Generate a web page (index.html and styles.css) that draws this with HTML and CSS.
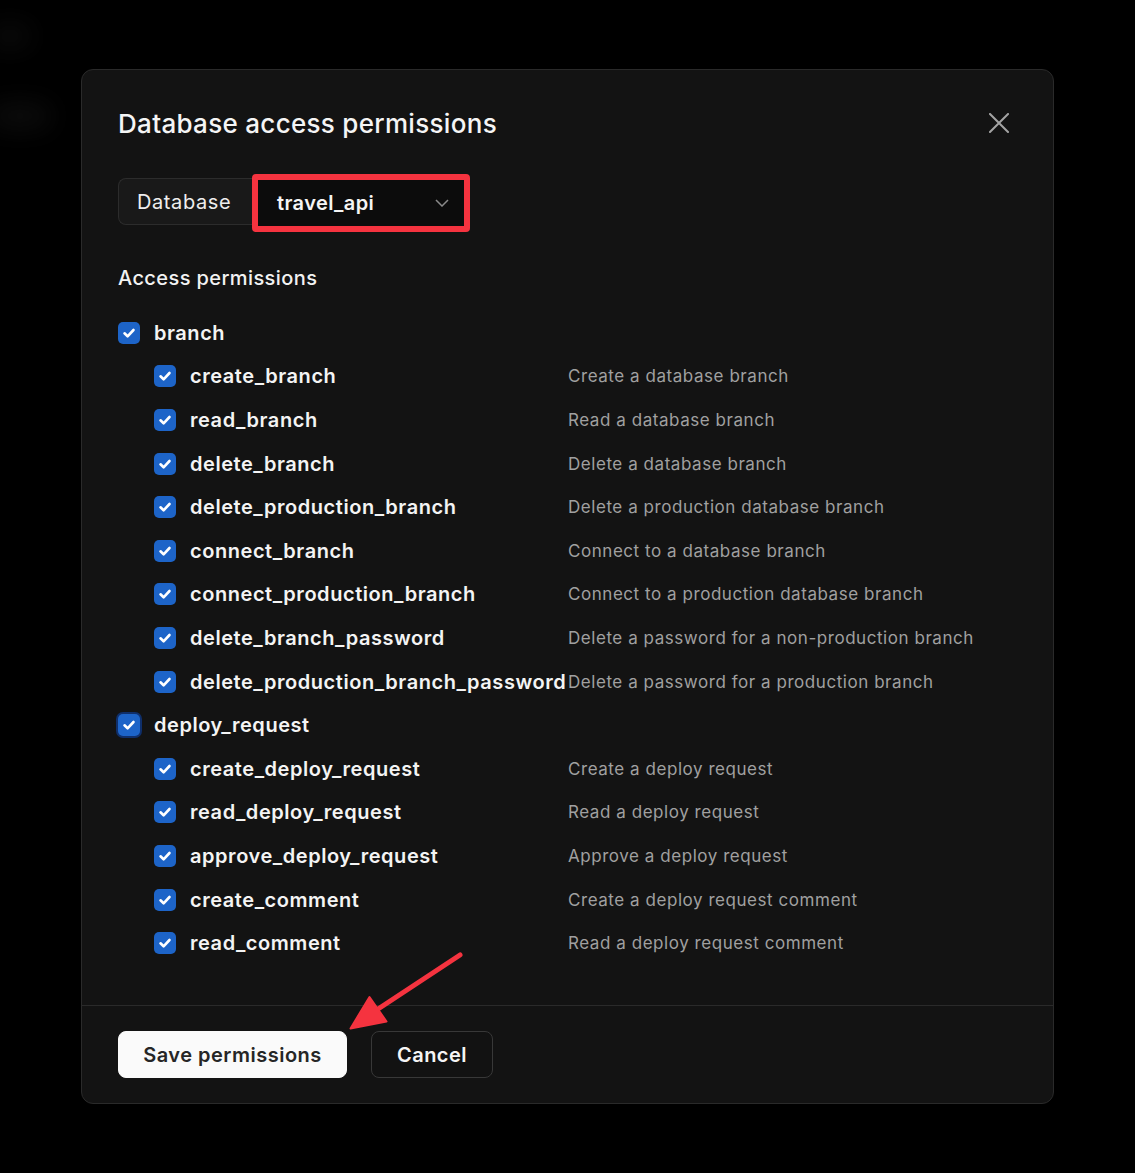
FILE: index.html
```html
<!DOCTYPE html>
<html lang="en">
<head>
<meta charset="utf-8">
<title>Database access permissions</title>
<link rel="stylesheet" href="styles.css">
</head>
<body>
<div class="backdrop">
  <div class="ghost ghost-a"></div>
  <div class="ghost ghost-b"></div>
  <div class="modal">
    <div class="modal-body">
      <div class="header">
        <h1 class="title">Database access permissions</h1>
        <button class="close" aria-label="Close">
          <svg width="20" height="20" viewBox="0 0 20 20"><path d="M1 1L19 19M19 1L1 19" stroke="#a3a3a3" stroke-width="2" stroke-linecap="square" fill="none"/></svg>
        </button>
      </div>
      <div class="db-picker">
        <div class="db-label">Database</div>
        <div class="db-select">
          <span>travel_api</span>
          <svg width="14" height="8" viewBox="0 0 14 8"><path d="M1 1L7 7L13 1" stroke="#8a8a8a" stroke-width="1.5" fill="none"/></svg>
        </div>
      </div>
      <h2 class="section">Access permissions</h2>
      <div class="perms">
        <div class="row parent"><span class="cb"><svg viewBox="0 0 22 22"><path d="M6.5 11.3L9.6 14.3L15.5 8" stroke="#fff" stroke-width="2.6" fill="none" stroke-linecap="round" stroke-linejoin="round"/></svg></span><span class="name">branch</span></div>
        <div class="row child"><span class="cb"><svg viewBox="0 0 22 22"><path d="M6.5 11.3L9.6 14.3L15.5 8" stroke="#fff" stroke-width="2.6" fill="none" stroke-linecap="round" stroke-linejoin="round"/></svg></span><span class="name">create_branch</span><span class="desc">Create a database branch</span></div>
        <div class="row child"><span class="cb"><svg viewBox="0 0 22 22"><path d="M6.5 11.3L9.6 14.3L15.5 8" stroke="#fff" stroke-width="2.6" fill="none" stroke-linecap="round" stroke-linejoin="round"/></svg></span><span class="name">read_branch</span><span class="desc">Read a database branch</span></div>
        <div class="row child"><span class="cb"><svg viewBox="0 0 22 22"><path d="M6.5 11.3L9.6 14.3L15.5 8" stroke="#fff" stroke-width="2.6" fill="none" stroke-linecap="round" stroke-linejoin="round"/></svg></span><span class="name">delete_branch</span><span class="desc">Delete a database branch</span></div>
        <div class="row child"><span class="cb"><svg viewBox="0 0 22 22"><path d="M6.5 11.3L9.6 14.3L15.5 8" stroke="#fff" stroke-width="2.6" fill="none" stroke-linecap="round" stroke-linejoin="round"/></svg></span><span class="name">delete_production_branch</span><span class="desc">Delete a production database branch</span></div>
        <div class="row child"><span class="cb"><svg viewBox="0 0 22 22"><path d="M6.5 11.3L9.6 14.3L15.5 8" stroke="#fff" stroke-width="2.6" fill="none" stroke-linecap="round" stroke-linejoin="round"/></svg></span><span class="name">connect_branch</span><span class="desc">Connect to a database branch</span></div>
        <div class="row child"><span class="cb"><svg viewBox="0 0 22 22"><path d="M6.5 11.3L9.6 14.3L15.5 8" stroke="#fff" stroke-width="2.6" fill="none" stroke-linecap="round" stroke-linejoin="round"/></svg></span><span class="name">connect_production_branch</span><span class="desc">Connect to a production database branch</span></div>
        <div class="row child"><span class="cb"><svg viewBox="0 0 22 22"><path d="M6.5 11.3L9.6 14.3L15.5 8" stroke="#fff" stroke-width="2.6" fill="none" stroke-linecap="round" stroke-linejoin="round"/></svg></span><span class="name">delete_branch_password</span><span class="desc">Delete a password for a non-production branch</span></div>
        <div class="row child"><span class="cb"><svg viewBox="0 0 22 22"><path d="M6.5 11.3L9.6 14.3L15.5 8" stroke="#fff" stroke-width="2.6" fill="none" stroke-linecap="round" stroke-linejoin="round"/></svg></span><span class="name">delete_production_branch_password</span><span class="desc">Delete a password for a production branch</span></div>
        <div class="row parent"><span class="cb focus"><svg viewBox="0 0 22 22"><path d="M6.5 11.3L9.6 14.3L15.5 8" stroke="#fff" stroke-width="2.6" fill="none" stroke-linecap="round" stroke-linejoin="round"/></svg></span><span class="name">deploy_request</span></div>
        <div class="row child"><span class="cb"><svg viewBox="0 0 22 22"><path d="M6.5 11.3L9.6 14.3L15.5 8" stroke="#fff" stroke-width="2.6" fill="none" stroke-linecap="round" stroke-linejoin="round"/></svg></span><span class="name">create_deploy_request</span><span class="desc">Create a deploy request</span></div>
        <div class="row child"><span class="cb"><svg viewBox="0 0 22 22"><path d="M6.5 11.3L9.6 14.3L15.5 8" stroke="#fff" stroke-width="2.6" fill="none" stroke-linecap="round" stroke-linejoin="round"/></svg></span><span class="name">read_deploy_request</span><span class="desc">Read a deploy request</span></div>
        <div class="row child"><span class="cb"><svg viewBox="0 0 22 22"><path d="M6.5 11.3L9.6 14.3L15.5 8" stroke="#fff" stroke-width="2.6" fill="none" stroke-linecap="round" stroke-linejoin="round"/></svg></span><span class="name">approve_deploy_request</span><span class="desc">Approve a deploy request</span></div>
        <div class="row child"><span class="cb"><svg viewBox="0 0 22 22"><path d="M6.5 11.3L9.6 14.3L15.5 8" stroke="#fff" stroke-width="2.6" fill="none" stroke-linecap="round" stroke-linejoin="round"/></svg></span><span class="name">create_comment</span><span class="desc">Create a deploy request comment</span></div>
        <div class="row child"><span class="cb"><svg viewBox="0 0 22 22"><path d="M6.5 11.3L9.6 14.3L15.5 8" stroke="#fff" stroke-width="2.6" fill="none" stroke-linecap="round" stroke-linejoin="round"/></svg></span><span class="name">read_comment</span><span class="desc">Read a deploy request comment</span></div>
      </div>
    </div>
    <div class="footer">
      <button class="btn primary">Save permissions</button>
      <button class="btn secondary">Cancel</button>
    </div>
  </div>
  <svg class="arrow" width="1135" height="1173" viewBox="0 0 1135 1173">
    <line x1="460" y1="955" x2="372" y2="1013" stroke="#f5333f" stroke-width="5" stroke-linecap="round"/>
    <path d="M350.5 1028.5L369.5 997L386.5 1021.5Z" fill="#f5333f" stroke="#f5333f" stroke-width="2" stroke-linejoin="round"/>
  </svg>
</div>
</body>
</html>
```

FILE: styles.css
```css
* { box-sizing: border-box; }
html, body { margin: 0; padding: 0; background: #000; }
body {
  font-family: Inter, "Noto Sans", "Liberation Sans", sans-serif;
  color: #f2f2f2;
  width: 1135px;
  height: 1173px;
  overflow: hidden;
}
.backdrop {
  position: relative;
  width: 1135px;
  height: 1173px;
  padding: 69px 0 0 81px;
  background: #000;
}
.ghost {
  position: absolute;
  background: #1a1a1a;
  filter: blur(14px);
  border-radius: 8px;
}
.ghost-a { left: -10px; top: 28px; width: 40px; height: 16px; opacity: 0.7; }
.ghost-b { left: -10px; top: 105px; width: 60px; height: 22px; opacity: 0.6; }
.modal {
  position: relative;
  width: 973px;
  height: 1035px;
  background: #131313;
  border: 1px solid #2a2a2a;
  border-radius: 12px;
  display: flex;
  flex-direction: column;
}
.modal-body {
  padding: 38px 36px 0 36px;
  flex: 1;
}
.header {
  display: flex;
  align-items: center;
  justify-content: space-between;
  height: 32px;
}
.title {
  margin: 0;
  font-size: 26px;
  font-weight: 500;
  letter-spacing: 0.3px;
  color: #f5f5f5;
  line-height: 32px;
}
.close {
  background: none;
  border: 0;
  padding: 0;
  margin-right: 8px;
  margin-top: -2px;
  width: 20px;
  height: 20px;
  display: flex;
}
.db-picker {
  display: flex;
  margin-top: 38px;
  height: 47px;
}
.db-label {
  width: 134px;
  height: 47px;
  border: 1px solid #2c2c2c;
  border-right: 0;
  border-radius: 8px 0 0 8px;
  background: #191919;
  font-size: 20px;
  font-weight: 400;
  letter-spacing: 0.6px;
  display: flex;
  align-items: center;
  padding-left: 18px;
  color: #eeeeee;
}
.db-select {
  width: 218px;
  height: 58px;
  margin-top: -4px;
  border: 6px solid #f5333f;
  border-radius: 4px;
  background: #0c0c0c;
  display: flex;
  align-items: center;
  justify-content: space-between;
  padding: 0 15px 0 19px;
  font-size: 20px;
  font-weight: 600;
  letter-spacing: 0.4px;
  color: #f5f5f5;
}
.section {
  margin: 41px 0 0 0;
  font-size: 20px;
  font-weight: 500;
  letter-spacing: 0.4px;
  line-height: 24px;
  color: #f2f2f2;
}
.perms {
  margin-top: 21px;
  display: flex;
  flex-direction: column;
}
.row {
  height: 43.6px;
  display: grid;
  grid-template-columns: 22px 378px 1fr;
  column-gap: 14px;
  align-items: center;
}
.row.child { padding-left: 36px; }
.row.parent { grid-template-columns: 22px 1fr; }
.cb {
  width: 22px;
  height: 22px;
  border-radius: 5px;
  background: #1d64c8;
  display: flex;
}
.cb svg { width: 22px; height: 22px; }
.cb.focus { box-shadow: 0 0 0 2px #0f2f6b; }
.name {
  font-size: 20px;
  font-weight: 600;
  letter-spacing: 0.55px;
  color: #f4f4f4;
  white-space: nowrap;
}
.desc {
  font-size: 17px;
  font-weight: 400;
  letter-spacing: 0.55px;
  color: #a0a0a0;
  white-space: nowrap;
  margin-left: -14px;
}
.footer {
  border-top: 1px solid #2a2a2a;
  padding: 25px 36px 25px 36px;
  display: flex;
  gap: 24px;
}
.btn {
  font-family: Inter, "Noto Sans", "Liberation Sans", sans-serif;
  font-size: 20px;
  font-weight: 600;
  letter-spacing: 0.5px;
  height: 47px;
  border-radius: 8px;
  padding: 0;
}
.primary {
  background: #fafafa;
  border: 1px solid #fafafa;
  color: #262626;
  width: 229px;
}
.secondary {
  background: #121212;
  border: 1px solid #383838;
  color: #f5f5f5;
  width: 122px;
}
.arrow {
  position: absolute;
  left: 0;
  top: 0;
  pointer-events: none;
}
```
